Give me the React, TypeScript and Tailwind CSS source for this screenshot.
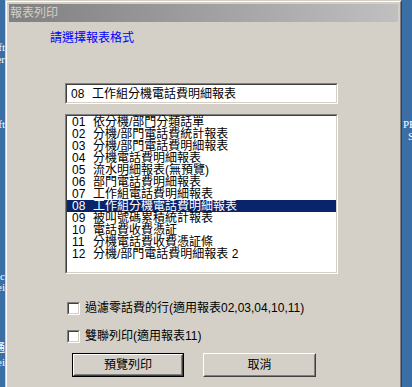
import React from "react";

const items: [string, string][] = [
  ["01", "依分機/部門分類話單"],
  ["02", "分機/部門電話費統計報表"],
  ["03", "分機/部門電話費明細報表"],
  ["04", "分機電話費明細報表"],
  ["05", "流水明細報表(無預覽)"],
  ["06", "部門電話費明細報表"],
  ["07", "工作組電話費明細報表"],
  ["08", "工作組分機電話費明細報表"],
  ["09", "被叫號碼累積統計報表"],
  ["10", "電話費收費憑証"],
  ["11", "分機電話費收費憑証條"],
  ["12", "分機/部門電話費明細報表 2"],
];

function Checkbox({ label }: { label: string }) {
  return (
    <div className="flex items-center h-[13px] ml-[58px]">
      <div className="w-[13px] h-[13px] border border-t-[#808080] border-l-[#808080] border-b-white border-r-white">
        <div className="w-full h-full bg-white border border-t-[#404040] border-l-[#404040] border-b-[#d4d0c8] border-r-[#d4d0c8]" />
      </div>
      <span className="ml-[5px] leading-[13px] whitespace-nowrap text-black">{label}</span>
    </div>
  );
}

export default function App() {
  return (
    <div className="relative w-[412px] h-[387px] overflow-hidden bg-[#3a6ea5] text-[12px] font-['Liberation_Sans','Noto_Sans_CJK_TC',sans-serif]">
      {/* desktop icon labels peeking out */}
      <div className="absolute left-0 top-0 w-[5px] h-full overflow-hidden text-white text-[11px] leading-[12px] font-['Liberation_Serif','Noto_Sans_CJK_TC',serif]">
        <span className="absolute right-0 top-[41px] whitespace-nowrap">oft</span>
        <span className="absolute right-0 top-[53px] whitespace-nowrap">ver</span>
        <span className="absolute right-0 top-[118px] whitespace-nowrap">oft</span>
        <span className="absolute right-0 top-[270px] whitespace-nowrap">ec</span>
        <span className="absolute right-0 top-[281px] whitespace-nowrap">nei</span>
        <span className="absolute right-0 top-[342px] whitespace-nowrap">通</span>
        <span className="absolute right-0 top-[356px] whitespace-nowrap">nei</span>
      </div>
      <div className="absolute left-[402px] top-0 w-[10px] h-full overflow-hidden text-white text-[11px] leading-[12px] font-['Liberation_Serif',serif]">
        <span className="absolute left-[1px] top-[118px] whitespace-nowrap">PE</span>
        <span className="absolute left-[6px] top-[130px] whitespace-nowrap">S</span>
      </div>

      {/* window */}
      <div className="absolute left-[5px] top-0 w-[397px] h-[400px] border border-t-[#d4d0c8] border-l-[#d4d0c8] border-b-[#404040] border-r-[#404040]">
        <div className="h-full flex flex-col bg-[#d4d0c8] p-[2px] border border-t-white border-l-white border-b-[#808080] border-r-[#808080]">
          <div className="h-[18px] flex items-center pl-[1px] bg-linear-to-r from-[#808080] to-[#c0c0c0] text-[#d4d0c8] leading-[12px]">
            報表列印
          </div>

          <div className="flex flex-col">
            <div className="ml-[41px] mt-[9px] h-[14px] leading-[14px] text-[#0000ff]">請選擇報表格式</div>

            {/* selected text field */}
            <div className="ml-[56px] mt-[38px] w-[273px] h-[21px] border border-t-[#808080] border-l-[#808080] border-b-white border-r-white">
              <div className="h-full bg-white flex items-center pl-[4px] border border-t-[#404040] border-l-[#404040] border-b-[#d4d0c8] border-r-[#d4d0c8] text-black whitespace-nowrap">
                <span className="w-[21px] shrink-0">08</span>
                <span>工作組分機電話費明細報表</span>
              </div>
            </div>

            {/* list box */}
            <div className="ml-[56px] mt-[10px] w-[273px] h-[160px] border border-t-[#808080] border-l-[#808080] border-b-white border-r-white">
              <div className="h-full bg-white border border-t-[#404040] border-l-[#404040] border-b-[#d4d0c8] border-r-[#d4d0c8] flex flex-col">
                {items.map(([n, t]) => {
                  const sel = n === "08";
                  return (
                    <div
                      key={n}
                      className={
                        sel
                          ? "h-[12px] leading-[12px] flex pl-[5px] whitespace-nowrap bg-[#0a246a] text-white"
                          : "h-[12px] leading-[12px] flex pl-[5px] whitespace-nowrap text-black"
                      }
                    >
                      <span className="w-[21px] shrink-0">{n}</span>
                      <span>{t}</span>
                    </div>
                  );
                })}
              </div>
            </div>

            <div className="mt-[28px]">
              <Checkbox label="過濾零話費的行(適用報表02,03,04,10,11)" />
            </div>
            <div className="mt-[15px]">
              <Checkbox label="雙聯列印(適用報表11)" />
            </div>

            {/* buttons */}
            <div className="mt-[10px] ml-[63px] flex gap-[19px]">
              <div className="w-[112px] h-[24px] border border-black">
                <div className="h-full border border-t-white border-l-white border-b-[#404040] border-r-[#404040]">
                  <div className="h-full flex items-center justify-center text-black border border-t-[#d4d0c8] border-l-[#d4d0c8] border-b-[#808080] border-r-[#808080]">
                    預覽列印
                  </div>
                </div>
              </div>
              <div className="w-[113px] h-[24px] border border-t-white border-l-white border-b-[#404040] border-r-[#404040]">
                <div className="h-full flex items-center justify-center text-black border border-t-[#d4d0c8] border-l-[#d4d0c8] border-b-[#808080] border-r-[#808080]">
                  取消
                </div>
              </div>
            </div>
          </div>
        </div>
      </div>
    </div>
  );
}
